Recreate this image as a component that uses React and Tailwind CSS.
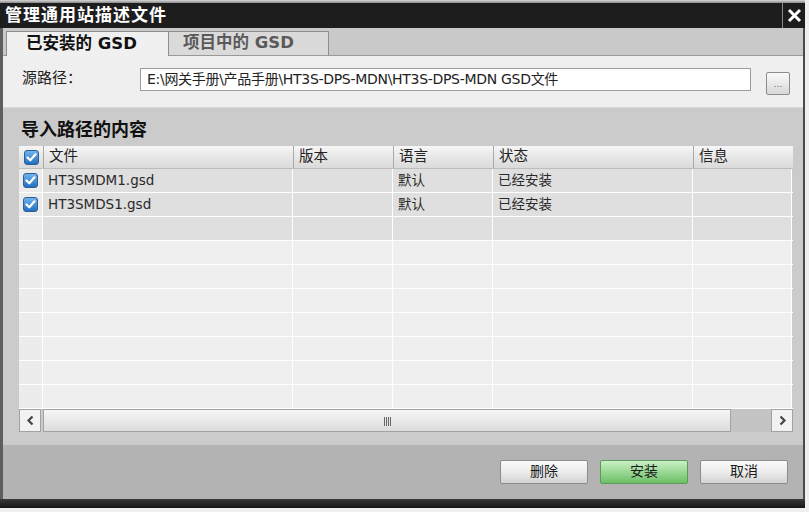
import React from 'react';

const cjk = "font-['DejaVu_Sans','Noto_Sans_CJK_SC',sans-serif]";

const columns = [
  { key: 'file', label: '文件', w: 'w-[250px]' },
  { key: 'ver', label: '版本', w: 'w-[100px]' },
  { key: 'lang', label: '语言', w: 'w-[100px]' },
  { key: 'state', label: '状态', w: 'w-[200px]' },
  { key: 'info', label: '信息', w: 'w-[99px]' },
];

const rows = [
  { file: 'HT3SMDM1.gsd', ver: '', lang: '默认', state: '已经安装', info: '', checked: true },
  { file: 'HT3SMDS1.gsd', ver: '', lang: '默认', state: '已经安装', info: '', checked: true },
  { blank: true, dark: true },
  ...Array.from({ length: 7 }, () => ({ blank: true })),
];

function Check() {
  return (
    <div className="w-[15px] h-[15px] rounded-[3px] border border-[#2f5f8c] bg-gradient-to-b from-[#6fb4f0] to-[#1f6fc0] flex items-center justify-center">
      <svg width="11" height="11" viewBox="0 0 11 11">
        <path d="M1.5 5.5 L4.3 8.3 L9.5 2.3" fill="none" stroke="#ffffff" strokeWidth="2.2" strokeLinecap="round" strokeLinejoin="round" />
      </svg>
    </div>
  );
}

function Button({ children, green }) {
  return (
    <button
      className={`w-[88px] h-[24px] rounded-[2px] border text-[14px] text-[#1a1a1a] flex items-center justify-center ${
        green
          ? 'border-[#5c9a5c] bg-gradient-to-b from-[#c9f0c5] via-[#9ad894] to-[#6cbf66]'
          : 'border-[#8c8c8c] bg-gradient-to-b from-[#fafafa] via-[#ececec] to-[#d2d2d2]'
      }`}
    >
      {children}
    </button>
  );
}

export default function App() {
  return (
    <div className={`w-[809px] h-[512px] overflow-hidden bg-[#eeeeee] flex flex-col ${cjk}`}>
      <div className="h-[3px] bg-gradient-to-b from-[#d8d8d8] to-[#8a8a8a] mr-[4px]" />

      {/* Title bar */}
      <div className="h-[25px] flex mr-[4px] bg-[#1d1d1d]">
        <div className="flex-1 pl-[5px] flex items-center text-white text-[17px] font-bold leading-none tracking-[1px]">
          管理通用站描述文件
        </div>
        <div className="w-[23px] border-l border-[#8a8a8a] flex items-center justify-center">
          <svg width="15" height="15" viewBox="0 0 15 15">
            <path d="M2 2 L13 13 M13 2 L2 13" stroke="#ffffff" strokeWidth="3" />
          </svg>
        </div>
      </div>

      <div className="flex-1 flex mr-[4px] border-l-[3px] border-[#5e5e5e] border-r-[2px] border-r-[#4a4a4a]">
        <div className="flex-1 flex flex-col">
          {/* Tabs */}
          <div className="h-[28px] bg-[#c9c9c9] flex items-end pl-[3px] border-b border-[#9a9a9a]">
            <div className="h-[25px] w-[163px] bg-[#f0f0f0] border border-b-0 border-[#8e8e8e] flex items-center pl-[19px] text-[16.5px] font-bold text-[#111] -mb-px">
              已安装的 GSD
            </div>
            <div className="h-[24px] w-[160px] bg-[#dadada] border border-l-0 border-b-0 border-[#8e8e8e] flex items-center pl-[14px] text-[16.5px] font-bold text-[#5a5a5a]">
              项目中的 GSD
            </div>
          </div>

          {/* Source path */}
          <div className="h-[52px] bg-[#efefef] flex items-center border-b border-[#d8d8d8]">
            <div className="w-[137px] pl-[19px] text-[15px] text-[#222] -mt-[6px]">源路径：</div>
            <div className="w-[611px] h-[23px] bg-white border border-[#9c9c9c] flex items-center pl-[6px] text-[14px] text-[#222] tracking-[-0.3px] -mt-[4px]">
              E:\网关手册\产品手册\HT3S-DPS-MDN\HT3S-DPS-MDN GSD文件
            </div>
            <div className="ml-[15px] w-[24px] h-[23px] rounded-[2px] border border-[#8c8c8c] bg-gradient-to-b from-[#fafafa] to-[#d8d8d8] flex items-end justify-center pb-[5px] mt-[3px]">
              <span className="text-[9px] leading-none text-[#666]">...</span>
            </div>
          </div>

          {/* Import content */}
          <div className="flex-1 bg-[#cbcbcb] flex flex-col pl-[16px]">
            <div className="h-[38px] flex items-center text-[18px] font-bold text-[#111] pl-[2px] pt-[4px]">
              导入路径的内容
            </div>

            <div className="w-[774px] flex flex-col">
              {/* Header */}
              <div className="h-[23px] flex bg-gradient-to-b from-[#f6f6f6] to-[#dadada] border-b border-[#bdbdbd]">
                <div className="w-[24px] flex items-center justify-center">
                  <Check />
                </div>
                {columns.map((c) => (
                  <div key={c.key} className={`${c.w} border-l border-[#a8a8a8] pl-[5px] flex items-center text-[14.5px] text-[#222]`}>
                    {c.label}
                  </div>
                ))}
              </div>

              {/* Rows */}
              {rows.map((r, i) => (
                <div key={i} className="h-[24px] flex border-b border-white">
                  <div className="w-[24px] bg-[#ececec] flex items-center justify-center border-r border-white">
                    {r.checked && <Check />}
                  </div>
                  {columns.map((c) => (
                    <div
                      key={c.key}
                      className={`${c.w} border-r border-white pl-[5px] flex items-center text-[13.5px] text-[#2a2a2a] ${
                        r.blank && !r.dark ? 'bg-[#efefef]' : 'bg-[#dfdfdf]'
                      }`}
                    >
                      {r.blank ? '' : r[c.key]}
                    </div>
                  ))}
                </div>
              ))}

              {/* Horizontal scrollbar */}
              <div className="h-[23px] flex items-stretch">
                <div className="w-[22px] bg-[#f2f2f2] border border-[#a2a2a2] flex items-center justify-center">
                  <svg width="9" height="11" viewBox="0 0 9 11">
                    <path d="M6.5 1.5 L2.5 5.5 L6.5 9.5" fill="none" stroke="#444" strokeWidth="2.2" />
                  </svg>
                </div>
                <div className="w-[2px]" />
                <div className="w-[688px] border border-[#a2a2a2] bg-gradient-to-b from-[#f6f6f6] to-[#dcdcdc] flex items-center justify-center">
                  <div className="flex gap-[1px] h-[9px] mt-[1px]">
                    <div className="w-px bg-[#666]" />
                    <div className="w-px bg-[#666]" />
                    <div className="w-px bg-[#666]" />
                    <div className="w-px bg-[#666]" />
                  </div>
                </div>
                <div className="flex-1 bg-[#c4c4c4]" />
                <div className="w-[22px] bg-[#f2f2f2] border border-[#a2a2a2] flex items-center justify-center">
                  <svg width="9" height="11" viewBox="0 0 9 11">
                    <path d="M2.5 1.5 L6.5 5.5 L2.5 9.5" fill="none" stroke="#444" strokeWidth="2.2" />
                  </svg>
                </div>
              </div>
            </div>
            <div className="flex-1" />
          </div>

          {/* Footer */}
          <div className="h-[54px] bg-[#b3b3b3] flex items-center justify-end gap-[12px] pr-[15px] pb-[1px]">
            <Button>删除</Button>
            <Button green>安装</Button>
            <Button>取消</Button>
          </div>
        </div>
      </div>

      <div className="h-[9px] bg-gradient-to-b from-[#3a3a3a] to-[#161616] mr-[4px]" />
      <div className="h-[4px] bg-[#f0f0f0]" />
    </div>
  );
}
